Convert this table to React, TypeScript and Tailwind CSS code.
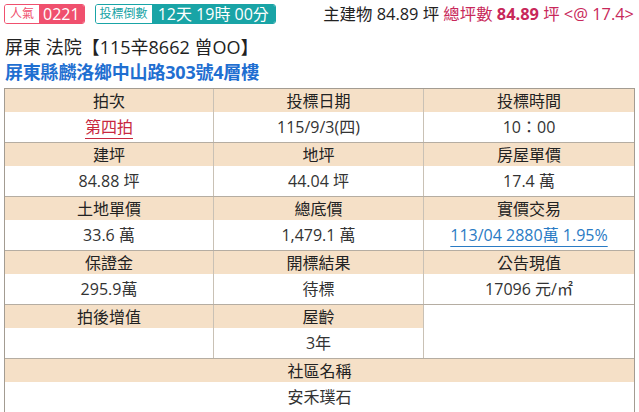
import React from "react";

const font = { fontFamily: '"Open Sans", "Noto Sans CJK TC", sans-serif' };

function Pair({
  heads,
  values,
  last,
}: {
  heads: React.ReactNode[];
  values: React.ReactNode[];
  last?: boolean;
}) {
  return (
    <div className={`grid grid-cols-[209px_210px_1fr] grid-rows-[23px_30px] ${last ? "" : "border-b border-[#b5ada2]"}`}>
      {heads.map((h, i) => (
        <div
          key={"h" + i}
          className={`flex items-center justify-center bg-[#f5e0c7] text-[16px] text-[#222] ${i < 2 ? "border-r border-[#c9c1b5]" : ""}`}
        >
          {h}
        </div>
      ))}
      {values.map((v, i) => (
        <div
          key={"v" + i}
          className={`flex items-center justify-center bg-white text-[16px] text-[#333] ${i < 2 ? "border-r border-[#c9c1b5]" : ""}`}
        >
          {v}
        </div>
      ))}
    </div>
  );
}

export default function App() {
  return (
    <div className="w-[639px] h-[412px] bg-white overflow-hidden" style={font}>
      <div className="flex items-center pl-[4px] pr-[5px] pt-[4px] h-[24px]">
        <div className="flex h-[20px] rounded-[3px] overflow-hidden border border-[#f0506e]">
          <span className="flex items-center px-[5px] bg-white text-[#f0506e] text-[12px] leading-none">人氣</span>
          <span className="flex items-center px-[4px] bg-[#f0506e] text-white text-[16px] leading-none">0221</span>
        </div>
        <div className="ml-[10px] flex h-[20px] rounded-[3px] overflow-hidden border border-[#19a4a6]">
          <span className="flex items-center px-[4px] bg-white text-[#19a4a6] text-[12px] leading-none">投標倒數</span>
          <span className="flex items-center pl-[6px] pr-[6px] bg-[#19a4a6] text-white text-[16px] leading-none">12天 19時 00分</span>
        </div>
        <div className="ml-auto text-[16.4px] leading-none text-[#222] whitespace-nowrap">
          主建物 84.89 坪 <span className="text-[#c8285a]">總坪數 <b>84.89</b> 坪 &lt;@ 17.4&gt;</span>
        </div>
      </div>
      <div className="pl-[5px] mt-[12px] text-[18px] leading-[22px] text-[#222]">屏東 法院【115辛8662 曾OO】</div>
      <div className="pl-[5px] mt-[3px] text-[18px] leading-[22px] font-bold text-[#1f6fd1] tracking-[-0.2px]">屏東縣麟洛鄉中山路303號4層樓</div>
      <div className="ml-[4px] mt-[5px] w-[631px] border border-[#a39c92]">
        <Pair
          heads={["拍次", "投標日期", "投標時間"]}
          values={[
            <span className="text-[#c8283f] underline decoration-[#c8283f] underline-offset-[5px]">第四拍</span>,
            "115/9/3(四)",
            "10：00",
          ]}
        />
        <Pair heads={["建坪", "地坪", "房屋單價"]} values={["84.88 坪", "44.04 坪", "17.4 萬"]} />
        <Pair
          heads={["土地單價", "總底價", "實價交易"]}
          values={[
            "33.6 萬",
            "1,479.1 萬",
            <span className="text-[#2a7bc4] underline underline-offset-[5px]">113/04 2880萬 1.95%</span>,
          ]}
        />
        <Pair heads={["保證金", "開標結果", "公告現值"]} values={["295.9萬", "待標", "17096 元/㎡"]} />
        <div className="grid grid-cols-[209px_210px_1fr] grid-rows-[23px_30px] border-b border-[#b5ada2]">
          <div className="flex items-center justify-center bg-[#f5e0c7] text-[16px] text-[#222] border-r border-[#c9c1b5]">拍後增值</div>
          <div className="flex items-center justify-center bg-[#f5e0c7] text-[16px] text-[#222] border-r border-[#c9c1b5]">屋齡</div>
          <div className="row-span-2 bg-white"></div>
          <div className="flex items-center justify-center bg-white text-[16px] text-[#333] border-r border-[#c9c1b5]"></div>
          <div className="flex items-center justify-center bg-white text-[16px] text-[#333] border-r border-[#c9c1b5]">3年</div>
        </div>
        <div className="grid grid-rows-[23px_30px]">
          <div className="flex items-center justify-center bg-[#f5e0c7] text-[16px] text-[#222]">社區名稱</div>
          <div className="flex items-center justify-center bg-white text-[16px] text-[#333]">安禾璞石</div>
        </div>
      </div>
    </div>
  );
}
